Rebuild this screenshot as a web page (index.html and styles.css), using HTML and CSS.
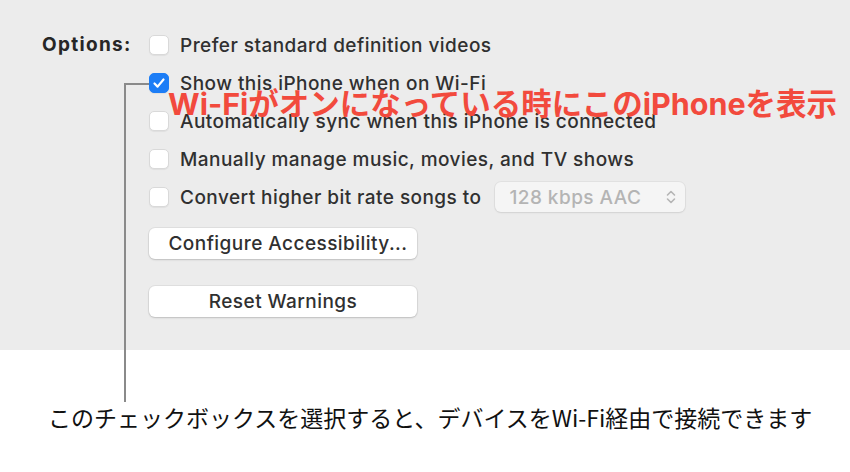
FILE: index.html
```html
<!DOCTYPE html>
<html>
<head>
<meta charset="utf-8">
<link rel="stylesheet" href="styles.css">
</head>
<body>
<div class="panel">
  <div class="options">
    <div class="label">Options:</div>
    <div class="rows">
      <div class="row"><span class="cb"></span><span>Prefer standard definition videos</span></div>
      <div class="row"><span class="cb on"><svg viewBox="0 0 20 20" width="20" height="20"><path d="M5.5 10.5 L8.6 13.6 L14.5 6.5" fill="none" stroke="#fff" stroke-width="2.2" stroke-linecap="round" stroke-linejoin="round"/></svg></span><span>Show this iPhone when on Wi-Fi</span></div>
      <div class="row"><span class="cb"></span><span>Automatically sync when this iPhone is connected</span></div>
      <div class="row"><span class="cb"></span><span>Manually manage music, movies, and TV shows</span></div>
      <div class="row"><span class="cb"></span><span>Convert higher bit rate songs to</span>
        <span class="popup"><span>128 kbps AAC</span><svg viewBox="0 0 12 18" width="12" height="18"><path d="M2.5 7 L6 3.5 L9.5 7 M2.5 11 L6 14.5 L9.5 11" fill="none" stroke="#b5b5b5" stroke-width="1.6" stroke-linecap="round" stroke-linejoin="round"/></svg></span>
      </div>
      <div class="btn first">Configure Accessibility...</div>
      <div class="btn second">Reset Warnings</div>
    </div>
  </div>
  <div class="callout-h"></div>
  <div class="callout-v"></div>
  <div class="note">Wi-Fiがオンになっている時にこのiPhoneを表示</div>
</div>
<div class="caption">このチェックボックスを選択すると、デバイスをWi-Fi経由で接続できます</div>
</body>
</html>
```
FILE: styles.css
```css
html, body {
  margin: 0;
  padding: 0;
  background: #fff;
  width: 850px;
  height: 472px;
  overflow: hidden;
}
body {
  font-family: Inter, "Noto Sans CJK JP", sans-serif;
}
.panel {
  position: relative;
  height: 350px;
  background: #ececec;
  box-sizing: border-box;
  padding-top: 26px;
}
.options {
  display: flex;
}
.label {
  width: 92px;
  margin-left: 42px;
  margin-right: 15px;
  height: 38px;
  line-height: 38px;
  font-size: 19px;
  font-weight: 700;
  letter-spacing: 1.3px;
  color: #262626;
  white-space: nowrap;
}
.rows {
  display: flex;
  flex-direction: column;
}
.row {
  height: 38px;
  display: flex;
  align-items: center;
  font-size: 19px;
  font-weight: 500;
  letter-spacing: 0.45px;
  color: #303030;
  white-space: nowrap;
}
.cb {
  width: 20px;
  height: 20px;
  box-sizing: border-box;
  border-radius: 5px;
  background: #fff;
  border: 1px solid #d9d9d9;
  box-shadow: 0 1px 1px rgba(0,0,0,0.06);
  margin-right: 11px;
  flex: none;
  display: flex;
}
.cb.on {
  background: #1c7df6;
  border-color: #1c7df6;
}
.cb.on svg {
  margin: -1px;
}
.popup {
  margin-left: 14px;
  width: 190px;
  height: 30px;
  box-sizing: border-box;
  border-radius: 6px;
  background: #f5f5f5;
  box-shadow: 0 0 0 1px rgba(0,0,0,0.04), 0 1px 2px rgba(0,0,0,0.08);
  display: flex;
  align-items: center;
  justify-content: space-between;
  padding: 0 8px 0 14px;
  color: #b4b4b4;
}
.btn {
  width: 268px;
  height: 31px;
  box-sizing: border-box;
  border-radius: 6px;
  background: #fff;
  box-shadow: 0 0 0 1px rgba(0,0,0,0.05), 0 1px 2px rgba(0,0,0,0.15);
  font-size: 19px;
  font-weight: 500;
  letter-spacing: 0.45px;
  color: #303030;
  display: flex;
  align-items: center;
  justify-content: center;
  white-space: nowrap;
}
.btn.first {
  margin-top: 12px;
  padding-left: 10px;
}
.btn.second {
  margin-top: 27px;
}
.callout-h {
  position: absolute;
  left: 124px;
  top: 83px;
  width: 25px;
  height: 2px;
  background: #8a8a8a;
}
.callout-v {
  position: absolute;
  left: 124px;
  top: 83px;
  width: 2px;
  height: 319px;
  background: #8a8a8a;
}
.note {
  position: absolute;
  left: 168px;
  top: 84px;
  font-family: Inter, "Noto Sans CJK JP", sans-serif;
  font-weight: 700;
  font-size: 30.5px;
  line-height: 40px;
  color: #f24a3d;
  white-space: nowrap;
}
.caption {
  margin-left: 48px;
  padding-top: 50px;
  font-family: "Noto Sans CJK JP", sans-serif;
  font-size: 23px;
  line-height: 34px;
  color: #111;
  white-space: nowrap;
}
```
